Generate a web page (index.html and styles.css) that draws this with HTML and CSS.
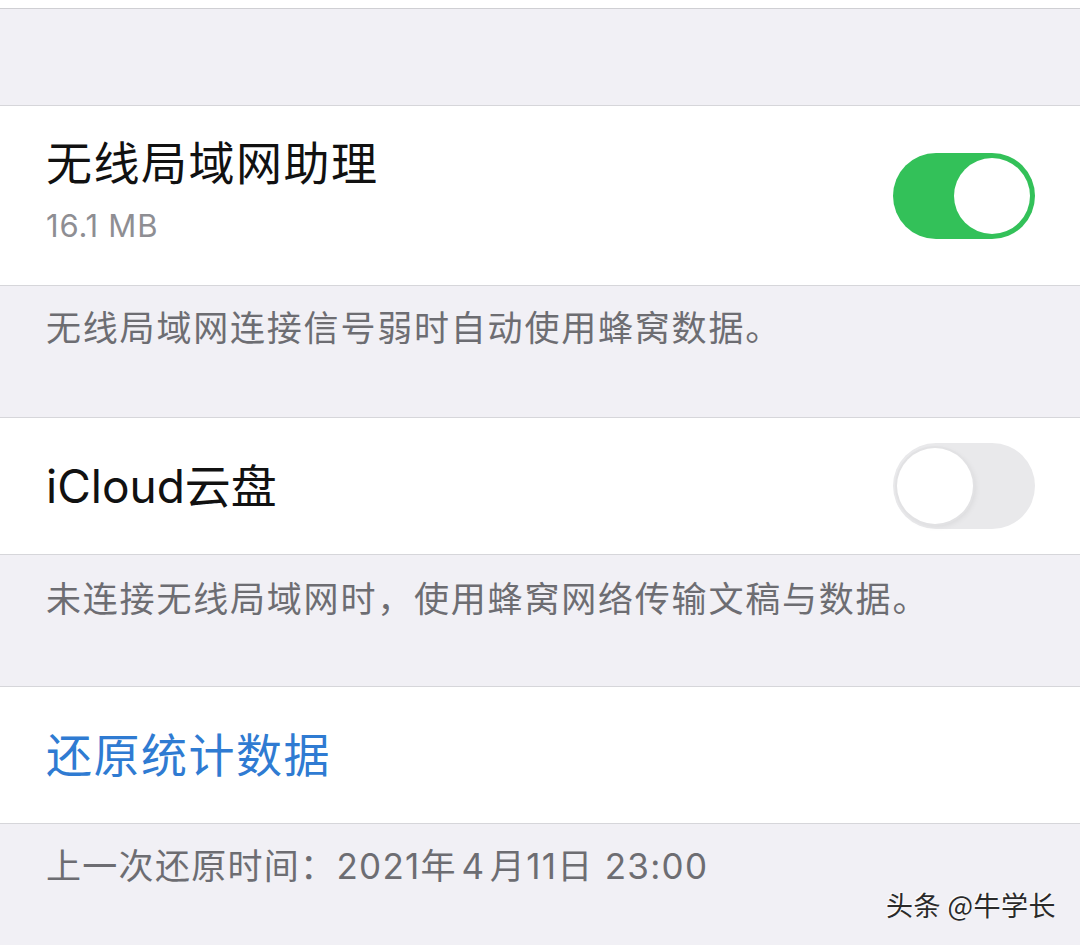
FILE: index.html
```html
<!DOCTYPE html>
<html lang="zh-CN">
<head>
<meta charset="utf-8">
<link rel="stylesheet" href="styles.css">
</head>
<body>
<div class="screen">
  <div class="topstrip"></div>
  <div class="spacer"></div>

  <div class="cell cell-tall">
    <div class="cell-text">
      <div class="title">无线局域网助理</div>
      <div class="subtitle">16.1 MB</div>
    </div>
    <div class="switch on"><span class="knob"></span></div>
  </div>
  <div class="footer footer-1">无线局域网连接信号弱时自动使用蜂窝数据。</div>

  <div class="cell cell-std">
    <div class="title tight">iCloud云盘</div>
    <div class="switch off"><span class="knob"></span></div>
  </div>
  <div class="footer footer-2">未连接无线局域网时，使用蜂窝网络传输文稿与数据。</div>

  <div class="cell cell-std">
    <div class="title link">还原统计数据</div>
  </div>
  <div class="footer footer-3">上一次还原时间：2021年<span class="thin"> </span>4<span class="thin"> </span>月11日 23:00</div>

  <div class="watermark">头条 @牛学长</div>
</div>
</body>
</html>
```

FILE: styles.css
```css
* { box-sizing: border-box; margin: 0; padding: 0; }

html, body {
  width: 1080px;
  height: 945px;
  overflow: hidden;
  background: #f1f0f5;
}

.screen {
  position: relative;
  width: 1080px;
  height: 945px;
  display: flex;
  flex-direction: column;
  font-family: Inter, "Noto Sans CJK SC", sans-serif;
  background: #f1f0f5;
}

.topstrip {
  height: 9px;
  background: #ffffff;
  border-bottom: 1px solid #cfcfd3;
}

.spacer {
  height: 96px;
}

.cell {
  display: flex;
  align-items: center;
  justify-content: space-between;
  background: #ffffff;
  border-top: 1px solid #d6d6da;
  border-bottom: 1px solid #d6d6da;
  padding: 0 45px 0 46px;
}

.cell-tall { height: 181px; }
.cell-std { height: 138px; }

.cell-text {
  display: flex;
  flex-direction: column;
  gap: 17px;
  padding-bottom: 12px;
}

.title {
  font-size: 46px;
  line-height: 56px;
  color: #111111;
  letter-spacing: 1.5px;
}

.title.tight { letter-spacing: 0; }

.subtitle {
  font-size: 31px;
  line-height: 36px;
  color: #8e8e93;
  letter-spacing: 0.8px;
}

.link {
  color: #2f7bd2;
  letter-spacing: 1.5px;
}

.footer {
  padding-left: 46px;
  font-size: 35px;
  line-height: 44px;
  color: #6d6d72;
  letter-spacing: 1.8px;
}

.footer-1 { height: 131px; padding-top: 20px; }
.footer-2 { height: 131px; padding-top: 22px; }
.footer-3 { flex: 1; padding-top: 20px; letter-spacing: 1.3px; }

.thin { letter-spacing: 0; font-size: 16px; }

.switch {
  position: relative;
  width: 142px;
  height: 86px;
  border-radius: 43px;
  flex-shrink: 0;
}

.switch.on { background: #33c159; }
.switch.off { background: #e9e9eb; }

.knob {
  position: absolute;
  top: 5px;
  width: 76px;
  height: 76px;
  border-radius: 50%;
  background: #ffffff;
}

.switch.on .knob { right: 5px; }
.switch.off .knob {
  left: 4px;
  box-shadow: 0 0 0 2px #e2e2e4, 2px 2px 6px rgba(0,0,0,0.08);
}

.watermark {
  position: absolute;
  right: 24px;
  bottom: 24px;
  font-family: "Noto Sans CJK SC", sans-serif;
  font-size: 27px;
  line-height: 32px;
  color: #2a2a2a;
  letter-spacing: 0.5px;
  text-shadow: -1px -1px 0 #ffffff;
}
```
